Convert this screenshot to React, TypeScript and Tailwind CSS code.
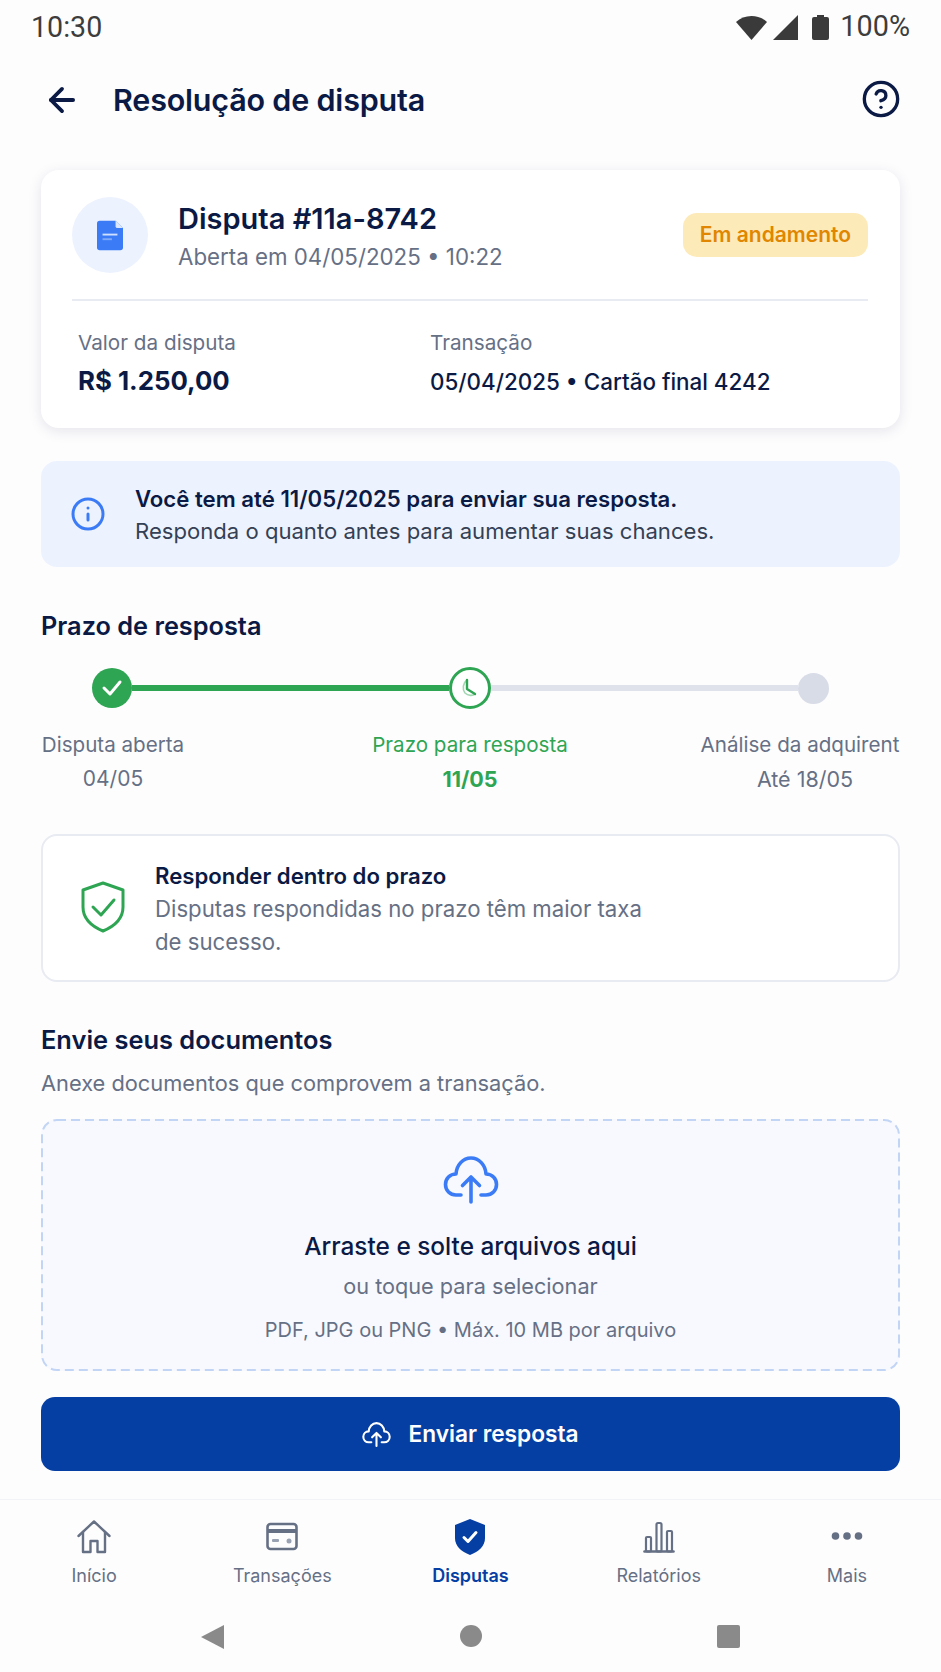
import { ArrowLeft, CircleHelp, Info } from "lucide-react";

// ─── Bottom nav ───────────────────────────────────────────────────────────────
const NAV_ITEMS = [
  { label: "Início", active: false, icon: <HomeIcon /> },
  { label: "Transações", active: false, icon: <CardIcon /> },
  { label: "Disputas", active: true, icon: <ShieldFilledIcon /> },
  { label: "Relatórios", active: false, icon: <BarsIcon /> },
  { label: "Mais", active: false, icon: <DotsIcon /> },
];

function HomeIcon() {
  return (
    <svg width="36" height="36" viewBox="0 0 36 36" fill="none" stroke="#667085" strokeWidth="2.4" strokeLinejoin="round" strokeLinecap="round">
      <path d="M2.500 17 18 2.500 33.500 17" />
      <path d="M7 13v20h7.500V22h7v11H29V13" />
    </svg>
  );
}

function CardIcon() {
  return (
    <svg width="36" height="36" viewBox="0 0 36 36" fill="none">
      <rect x="3.500" y="5" width="29" height="25" rx="3" stroke="#667085" strokeWidth="2.6" />
      <rect x="3.500" y="10" width="29" height="4" fill="#667085" />
      <rect x="8" y="20" width="7" height="3" rx="1" fill="#98a2b3" />
      <circle cx="25" cy="22" r="2.500" fill="#98a2b3" />
    </svg>
  );
}

function ShieldFilledIcon() {
  return (
    <svg width="36" height="38" viewBox="0 0 36 38" fill="none">
      <path d="M18 1 33 7v13c0 8-6 13.500-15 17C9 33.500 3 28 3 20V7z" fill="#063fa3" />
      <path d="m12 19.500 4 4 8-9" stroke="#fff" strokeWidth="3" strokeLinecap="round" strokeLinejoin="round" />
    </svg>
  );
}

function BarsIcon() {
  return (
    <svg width="36" height="36" viewBox="0 0 36 36" fill="none" stroke="#667085" strokeWidth="2.200" strokeLinejoin="round">
      <path d="M3.500 32.500h29" strokeWidth="2.600" strokeLinecap="round" />
      <rect x="5" y="18" width="5" height="14.500" rx="1" />
      <rect x="15.500" y="4" width="5" height="28.500" rx="1.500" />
      <rect x="26" y="12" width="5" height="20.500" rx="1" />
    </svg>
  );
}

function DotsIcon() {
  return (
    <svg width="36" height="36" viewBox="0 0 36 36" fill="#667085">
      <circle cx="6.500" cy="17" r="3.800" />
      <circle cx="18" cy="17" r="3.800" />
      <circle cx="29.500" cy="17" r="3.800" />
    </svg>
  );
}

function CloudUpIcon({ size, stroke, width }: { size: number; stroke: string; width: number }) {
  return (
    <svg width={size} height={size} viewBox="0 0 56 56" fill="none" stroke={stroke} strokeWidth={width} strokeLinecap="round" strokeLinejoin="round">
      <path d="M18 43h-5C7 43 2.500 38.500 2.500 32.500 2.500 26.500 7 22 13 22c.5-9 7-16 15-16s14.500 7 15 16c6 0 10.500 4.500 10.500 10.500S49 43 43 43h-5" />
      <path d="M28 50V25M19.500 33.500 28 25l8.500 8.500" />
    </svg>
  );
}

export default function App() {
  return (
    <div
      className="w-[941px] h-[1672px] bg-[#fdfdfe] flex flex-col text-[#0b1a45] overflow-hidden"
      style={{ fontFamily: '"Inter", "Noto Sans", sans-serif' }}
    >
      {/* ── Status bar ── */}
      <div className="h-[54px] pl-[31px] pr-[31px] flex items-center justify-between text-[#3d3d3d] font-['Roboto',sans-serif]">
        <span className="text-[28.600px]">10:30</span>
        <div className="flex items-center">
          <svg width="31" height="25" viewBox="0 0 31 25" fill="#3a3a3a">
            <path d="M0 7C4 3 9.500 1 15.500 1S27 3 31 7L15.500 25z" />
          </svg>
          <svg className="ml-[6px]" width="25" height="25" viewBox="0 0 25 25" fill="#3a3a3a">
            <path d="M25 0v25H0z" />
          </svg>
          <svg className="ml-[14px]" width="17" height="25" viewBox="0 0 17 25" fill="#3a3a3a">
            <path d="M5 0h7v2h3a2 2 0 0 1 2 2v19a2 2 0 0 1-2 2H2a2 2 0 0 1-2-2V4a2 2 0 0 1 2-2h3z" />
          </svg>
          <span className="text-[28.800px] ml-[11px]">100%</span>
        </div>
      </div>

      {/* ── Header ── */}
      <div className="h-[92px] pl-[43px] pr-[40px] flex items-center justify-between">
        <div className="flex items-center gap-[32px]">
          <ArrowLeft size={38} strokeWidth={2.4} className="text-[#0b1a45]" />
          <h1 className="text-[30.500px] font-semibold tracking-[-0.2px]">Resolução de disputa</h1>
        </div>
        <CircleHelp size={40} strokeWidth={2} className="text-[#0b1a45] -mt-[2px]" />
      </div>

      <div className="px-[41px] flex flex-col">
        {/* ── Dispute card ── */}
        <div className="mt-[24px] h-[258px] bg-white rounded-[18px] pl-[31px] pr-[32px] shadow-[0_3px_14px_rgba(16,24,64,0.10)]">
          <div className="h-[131px] flex items-center justify-between border-b-2 border-[#e8ebf2] pt-[3px]">
            <div className="flex items-center gap-[30px]">
              <div className="w-[76px] h-[76px] rounded-full bg-[#ecf2fe] flex items-center justify-center mb-[2px]">
                <svg width="26" height="31" viewBox="0 0 28 32">
                  <path d="M3 0h17l8 8v21a3 3 0 0 1-3 3H3a3 3 0 0 1-3-3V3a3 3 0 0 1 3-3z" fill="#3b7cf6" />
                  <path d="M20 0v6a2 2 0 0 0 2 2h6z" fill="#dbe7fe" />
                  <rect x="6" y="14" width="16" height="2" fill="#cfe0ff" />
                  <rect x="6" y="19" width="10" height="2" fill="#7faafa" />
                </svg>
              </div>
              <div className="pt-[2px]">
                <div className="text-[29px] leading-[36px] font-semibold">Disputa #11a-8742</div>
                <div className="text-[22.300px] leading-[32px] text-[#667085] mt-[4px]">Aberta em 04/05/2025 • 10:22</div>
              </div>
            </div>
            <span className="h-[44px] mb-[2px] px-[17px] rounded-[14px] bg-[#fdeab9] text-[#e08600] text-[21px] font-semibold flex items-center">
              Em andamento
            </span>
          </div>
          <div className="flex pt-[27px] pl-[6px]">
            <div className="w-[352px]">
              <div className="text-[20.700px] leading-[30px] text-[#667085]">Valor da disputa</div>
              <div className="text-[25.800px] leading-[36px] font-bold mt-[5px]">R$ 1.250,00</div>
            </div>
            <div>
              <div className="text-[20.700px] leading-[30px] text-[#667085]">Transação</div>
              <div className="text-[22.400px] leading-[36px] font-medium mt-[6px]">05/04/2025 • Cartão final 4242</div>
            </div>
          </div>
        </div>

        {/* ── Deadline notice ── */}
        <div className="mt-[33px] h-[106px] rounded-[16px] bg-[#edf3fe] px-[29px] flex items-center gap-[29px]">
          <Info size={36} strokeWidth={2} className="text-[#3b7cf6] shrink-0" />
          <div className="pt-[2px]">
            <div className="text-[22.200px] leading-[33px] font-semibold">Você tem até 11/05/2025 para enviar sua resposta.</div>
            <div className="text-[22.100px] leading-[33px] text-[#344054]">Responda o quanto antes para aumentar suas chances.</div>
          </div>
        </div>

        {/* ── Timeline ── */}
        <h2 className="mt-[41px] text-[25.300px] leading-[36px] font-semibold">Prazo de resposta</h2>
        <div className="mt-[23px] pl-[51px] pr-[71px] flex items-center">
          <div className="w-[40px] h-[40px] rounded-full bg-[#2ea552] flex items-center justify-center shrink-0">
            <svg width="22" height="18" viewBox="0 0 22 18" fill="none" stroke="#fff" strokeWidth="3" strokeLinecap="round" strokeLinejoin="round">
              <path d="m3 9 6 6L19 3" />
            </svg>
          </div>
          <div className="w-[317px] h-[6px] bg-[#2ea552]" />
          <div className="w-[42px] h-[42px] rounded-full border-[3.500px] border-[#2ea552] bg-white flex items-center justify-center shrink-0">
            <svg width="20" height="20" viewBox="0 0 20 20" fill="none" stroke="#2ea552" strokeWidth="2.400" strokeLinecap="round" strokeLinejoin="round">
              <path d="M7 2v9l8 5" />
              <path d="M7 2C3 5 2 11 5 15c3 3 8 3 10 1" strokeWidth="1.600" opacity="0.45" />
            </svg>
          </div>
          <div className="flex-1 h-[6px] bg-[#dfe2ea]" />
          <div className="w-[31px] h-[31px] rounded-full bg-[#d8dce6] shrink-0" />
        </div>
        <div className="mt-[19px] flex justify-between text-center text-[#667085]">
          <div className="w-[144px]">
            <div className="text-[20.600px] leading-[34px] whitespace-nowrap">Disputa aberta</div>
            <div className="text-[21px] leading-[34px]">04/05</div>
          </div>
          <div className="w-[196px] text-[#2ea552] ml-[55px]">
            <div className="text-[20.600px] leading-[34px] whitespace-nowrap">Prazo para resposta</div>
            <div className="text-[21.500px] leading-[34px] font-bold">11/05</div>
          </div>
          <div className="w-[200px]">
            <div className="text-[20.600px] leading-[34px] whitespace-nowrap">Análise da adquirent</div>
            <div className="text-[21.500px] leading-[34px] pl-[10px]">Até 18/05</div>
          </div>
        </div>

        {/* ── Tip ── */}
        <div className="mt-[38px] h-[148px] rounded-[16px] border-2 border-[#e8ebf2] bg-white pl-[38px] flex items-center gap-[30px]">
          <svg width="44" height="52" viewBox="0 0 44 52" fill="none" stroke="#2ea552" strokeWidth="3" strokeLinecap="round" strokeLinejoin="round" className="shrink-0 -mt-[3px]">
            <path d="M22 2 42 9v17c0 11-8 19-20 24C10 45 2 37 2 26V9z" />
            <path d="m12 26 8 8 13-15" />
          </svg>
          <div>
            <div className="text-[22.200px] leading-[33px] font-semibold">Responder dentro do prazo</div>
            <div className="text-[22.200px] leading-[33px] text-[#667085] w-[500px]">Disputas respondidas no prazo têm maior taxa de sucesso.</div>
          </div>
        </div>

        {/* ── Upload ── */}
        <h2 className="mt-[40px] text-[25.400px] leading-[36px] font-semibold">Envie seus documentos</h2>
        <p className="mt-[9px] text-[21.800px] leading-[32px] text-[#667085]">Anexe documentos que comprovem a transação.</p>
        <div className="relative mt-[20px] h-[252px] rounded-[16px] bg-[#f7f9fe] flex flex-col items-center pt-[33px]">
          <svg className="absolute inset-0" width="859" height="252" fill="none">
            <rect x="1" y="1" width="857" height="250" rx="15" stroke="#c3d5f5" strokeWidth="2" strokeDasharray="9 5" />
          </svg>
          <CloudUpIcon size={56} stroke="#3b7cf6" width={3.6} />
          <div className="mt-[20px] text-[24.400px] leading-[36px] font-medium">Arraste e solte arquivos aqui</div>
          <div className="mt-[6px] text-[21.700px] leading-[32px] text-[#667085]">ou toque para selecionar</div>
          <div className="mt-[13px] text-[20px] leading-[30px] text-[#667085]">PDF, JPG ou PNG • Máx. 10 MB por arquivo</div>
        </div>
        <button className="mt-[26px] h-[74px] rounded-[14px] bg-[#063fa3] text-white text-[22.700px] font-semibold flex items-center justify-center gap-[17px]">
          <CloudUpIcon size={29} stroke="#ffffff" width={4} />
          Enviar resposta
        </button>
      </div>

      {/* ── Bottom navigation ── */}
      <div className="mt-[28px] h-[100px] border-t border-[#f2f3f6] grid grid-cols-5 pt-[18px]">
        {NAV_ITEMS.map(({ label, active, icon }) => (
          <div key={label} className="flex flex-col items-center">
            <div className="h-[38px] flex items-center justify-center">{icon}</div>
            <span className={`mt-[6px] text-[18px] leading-[28px] ${active ? "text-[#063fa3] font-semibold" : "text-[#667085]"}`}>
              {label}
            </span>
          </div>
        ))}
      </div>

      {/* ── Android nav bar ── */}
      <div className="flex-1 flex items-start justify-center pt-[26px] gap-[235px]">
        <svg width="24" height="24" viewBox="0 0 24 24" fill="#8a8a8a">
          <path d="M23 0v24L0 12z" />
        </svg>
        <div className="w-[22px] h-[22px] rounded-full bg-[#8a8a8a]" />
        <div className="w-[23px] h-[23px] rounded-[2px] bg-[#8a8a8a]" />
      </div>
    </div>
  );
}
